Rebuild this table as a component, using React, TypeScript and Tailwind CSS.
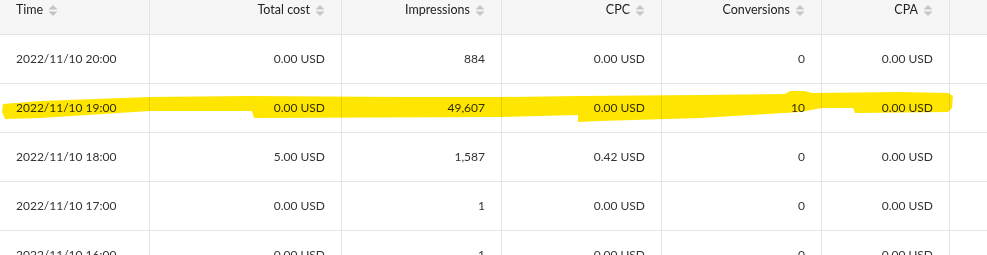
import React from "react";

type Row = {
  time: string;
  cost: string;
  impressions: string;
  cpc: string;
  conversions: string;
  cpa: string;
};

const rows: Row[] = [
  { time: "2022/11/10 20:00", cost: "0.00 USD", impressions: "884", cpc: "0.00 USD", conversions: "0", cpa: "0.00 USD" },
  { time: "2022/11/10 19:00", cost: "0.00 USD", impressions: "49,607", cpc: "0.00 USD", conversions: "10", cpa: "0.00 USD" },
  { time: "2022/11/10 18:00", cost: "5.00 USD", impressions: "1,587", cpc: "0.42 USD", conversions: "0", cpa: "0.00 USD" },
  { time: "2022/11/10 17:00", cost: "0.00 USD", impressions: "1", cpc: "0.00 USD", conversions: "0", cpa: "0.00 USD" },
  { time: "2022/11/10 16:00", cost: "0.00 USD", impressions: "1", cpc: "0.00 USD", conversions: "0", cpa: "0.00 USD" },
];

const grid = "grid grid-cols-[150px_192px_160px_160px_160px_128px_1fr]";
const cell = "border-r border-b border-[#e4e4e4] px-4 flex items-center";

function SortIcon() {
  return (
    <svg width="10" height="13" viewBox="0 0 10 13" className="shrink-0">
      <path d="M5 1 L9.5 5.5 L0.5 5.5 Z" fill="#c4c4c4" />
      <path d="M5 12 L9.5 7.5 L0.5 7.5 Z" fill="#c4c4c4" />
    </svg>
  );
}

function HeaderCell({ label, right }: { label: string; right?: boolean }) {
  return (
    <div
      className={`border-r border-b border-[#e4e4e4] px-4 pt-[2px] flex items-start gap-[5px] ${
        right ? "justify-end" : ""
      }`}
    >
      <span className="leading-[16px] text-[12.5px] text-[#222]">{label}</span>
      <span className="pt-[2px]">
        <SortIcon />
      </span>
    </div>
  );
}

/**
 * Hourly stats table with a marker highlight over one row.
 */
export default function App() {
  return (
    <div
      className="relative w-[987px] h-[255px] overflow-hidden bg-white text-[12px] text-[#333]"
      style={{ fontFamily: "Lato, 'Open Sans', sans-serif" }}
    >
      {/* Header */}
      <div className={`${grid} h-[35px] bg-[#f6f6f6]`}>
        <HeaderCell label="Time" />
        <HeaderCell label="Total cost" right />
        <HeaderCell label="Impressions" right />
        <HeaderCell label="CPC" right />
        <HeaderCell label="Conversions" right />
        <HeaderCell label="CPA" right />
        <div className="border-b border-[#e4e4e4]" />
      </div>

      {/* Body */}
      {rows.map((r) => (
        <div key={r.time} className={`${grid} h-[49px]`}>
          <div className={cell}>{r.time}</div>
          <div className={`${cell} justify-end`}>{r.cost}</div>
          <div className={`${cell} justify-end`}>{r.impressions}</div>
          <div className={`${cell} justify-end`}>{r.cpc}</div>
          <div className={`${cell} justify-end`}>{r.conversions}</div>
          <div className={`${cell} justify-end`}>{r.cpa}</div>
          <div className="border-b border-[#e4e4e4]" />
        </div>
      ))}

      {/* Marker highlight */}
      <svg
        width="987"
        height="255"
        viewBox="0 0 987 255"
        className="absolute top-0 left-0 pointer-events-none mix-blend-multiply"
      >
        <path
          d="M3 104 L40 101 L150 97 L250 96 L400 97 L500 97 L580 96 L700 95 L785 94 L790 91 L805 91 L812 93 L900 92 L948 93 L953 96 L952 108 L948 112 L855 113 L853 108 L822 108 L800 112 L700 118 L600 121 L578 122 L578 115 L500 117 L254 118 L252 111 L150 111 L40 118 L5 119 L2 112 Z"
          fill="#ffe600"
        />
      </svg>
    </div>
  );
}
